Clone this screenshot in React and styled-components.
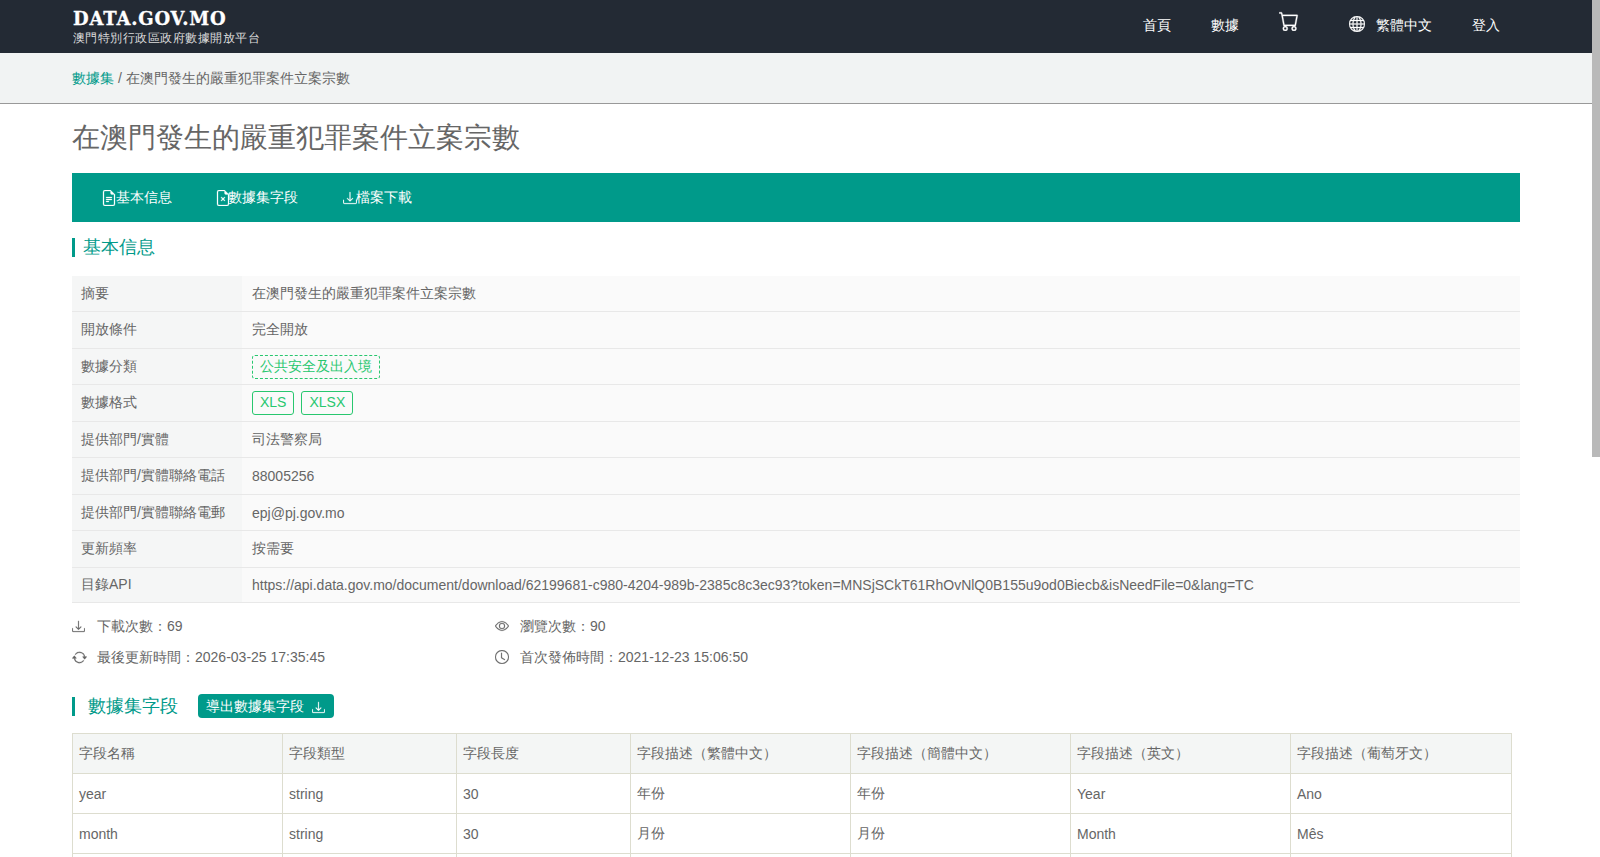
import React from 'react';
import styled, { createGlobalStyle } from 'styled-components';
import {
  BsArrowRepeat,
  BsCart,
  BsClock,
  BsDownload,
  BsEye,
  BsFileEarmarkText,
  BsFileEarmarkX,
  BsGlobe,
} from 'react-icons/bs';

const infoRows = [
  { label: '摘要', value: '在澳門發生的嚴重犯罪案件立案宗數' },
  { label: '開放條件', value: '完全開放' },
  { label: '數據分類', tags: ['公共安全及出入境'], dashed: true },
  { label: '數據格式', tags: ['XLS', 'XLSX'] },
  { label: '提供部門/實體', value: '司法警察局' },
  { label: '提供部門/實體聯絡電話', value: '88005256' },
  { label: '提供部門/實體聯絡電郵', value: 'epj@pj.gov.mo' },
  { label: '更新頻率', value: '按需要' },
  {
    label: '目錄API',
    value:
      'https://api.data.gov.mo/document/download/62199681-c980-4204-989b-2385c8c3ec93?token=MNSjSCkT61RhOvNlQ0B155u9od0Biecb&isNeedFile=0&lang=TC',
  },
];

const columns = [
  { title: '字段名稱', width: 210 },
  { title: '字段類型', width: 174 },
  { title: '字段長度', width: 174 },
  { title: '字段描述（繁體中文）', width: 220 },
  { title: '字段描述（簡體中文）', width: 220 },
  { title: '字段描述（英文）', width: 220 },
  { title: '字段描述（葡萄牙文）', width: 221 },
];

const fields = [
  ['year', 'string', '30', '年份', '年份', 'Year', 'Ano'],
  ['month', 'string', '30', '月份', '月份', 'Month', 'Mês'],
  ['', '', '', '', '', '', ''],
];

export default function App() {
  return (
    <>
      <GlobalStyle />
      <ScrollThumb />
      <Page>
        <Header>
          <Brand>
            <BrandName>DATA.GOV.MO</BrandName>
            <BrandSub>澳門特別行政區政府數據開放平台</BrandSub>
          </Brand>
          <Nav>
            <NavLink>首頁</NavLink>
            <NavLink>數據</NavLink>
            <CartLink>
              <BsCart size={20} />
            </CartLink>
            <LangLink>
              <BsGlobe size={16} />
              繁體中文
            </LangLink>
            <NavLink>登入</NavLink>
          </Nav>
        </Header>

        <Breadcrumb>
          <Crumb>數據集</Crumb> / 在澳門發生的嚴重犯罪案件立案宗數
        </Breadcrumb>

        <Main>
          <Title>在澳門發生的嚴重犯罪案件立案宗數</Title>

          <TabBar>
            <Tab>
              <BsFileEarmarkText size={16} />
              基本信息
            </Tab>
            <Tab>
              <BsFileEarmarkX size={16} />
              數據集字段
            </Tab>
            <Tab>
              <BsDownload size={14} />
              檔案下載
            </Tab>
          </TabBar>

          <SectionTitle>基本信息</SectionTitle>

          <InfoTable>
            <tbody>
              {infoRows.map((row) => (
                <tr key={row.label}>
                  <InfoLabel>{row.label}</InfoLabel>
                  <InfoValue>
                    {row.tags
                      ? row.tags.map((tag) => (
                          <Tag key={tag} $dashed={row.dashed}>
                            {tag}
                          </Tag>
                        ))
                      : row.value}
                  </InfoValue>
                </tr>
              ))}
            </tbody>
          </InfoTable>

          <Stats>
            <Stat>
              <StatIcon>
                <BsDownload size={13} />
              </StatIcon>
              下載次數：69
            </Stat>
            <Stat>
              <StatIcon>
                <BsEye size={14} />
              </StatIcon>
              瀏覽次數：90
            </Stat>
            <Stat>
              <StatIcon>
                <BsArrowRepeat size={15} />
              </StatIcon>
              最後更新時間：2026-03-25 17:35:45
            </Stat>
            <Stat>
              <StatIcon>
                <BsClock size={14} />
              </StatIcon>
              首次發佈時間：2021-12-23 15:06:50
            </Stat>
          </Stats>

          <FieldsHeading>
            <FieldsTitle>數據集字段</FieldsTitle>
            <ExportButton>
              導出數據集字段
              <BsDownload size={13} />
            </ExportButton>
          </FieldsHeading>

          <FieldTable>
            <colgroup>
              {columns.map((col) => (
                <col key={col.title} width={col.width} />
              ))}
            </colgroup>
            <thead>
              <tr>
                {columns.map((col) => (
                  <FieldHead key={col.title}>{col.title}</FieldHead>
                ))}
              </tr>
            </thead>
            <tbody>
              {fields.map((row, i) => (
                <tr key={i}>
                  {row.map((cell, j) => (
                    <FieldCell key={j}>{cell}</FieldCell>
                  ))}
                </tr>
              ))}
            </tbody>
          </FieldTable>
        </Main>
      </Page>
    </>
  );
}

const GlobalStyle = createGlobalStyle`
  body {
    margin: 0;
    background: #ffffff;
    color: #666666;
    font-family: "Liberation Sans", sans-serif;
    font-size: 14px;
  }

  svg {
    stroke: currentColor;
    stroke-width: 0.25;
  }
`;

// the browser scrollbar thumb, laid over the right edge of the window
const ScrollThumb = styled.div`
  position: fixed;
  top: 0;
  right: 0;
  width: 8px;
  height: 457px;
  background: #b9b9b9;
  z-index: 10;
`;

const Page = styled.div`
  min-height: 1607px;
  margin-right: 8px;
`;

const Header = styled.header`
  display: flex;
  justify-content: space-between;
  align-items: center;
  height: 53px;
  padding: 0 92px 0 73px;
  background: #232a34;
  color: #ffffff;
`;

const Brand = styled.div`
  display: flex;
  flex-direction: column;
  padding-top: 3px;
`;

const BrandName = styled.div`
  font-family: "DejaVu Serif", "Liberation Serif", serif;
  font-size: 18px;
  font-weight: 700;
  line-height: 20px;
  letter-spacing: 0.8px;
  -webkit-text-stroke: 0.3px #ffffff;
`;

const BrandSub = styled.div`
  margin-top: 1px;
  font-size: 12px;
  line-height: 17px;
  letter-spacing: 0.47px;
  color: #dcdcdc;
`;

const Nav = styled.nav`
  display: flex;
  align-items: center;
  gap: 40px;
  padding-bottom: 3px;
`;

const NavLink = styled.a`
  line-height: 20px;
`;

const CartLink = styled(NavLink)`
  display: flex;
  margin: -8px 10px 0 0;
`;

const LangLink = styled(NavLink)`
  display: flex;
  align-items: center;
  gap: 11px;

  svg {
    margin-top: -2px;
  }
`;

const Breadcrumb = styled.div`
  height: 51px;
  padding-left: 72px;
  line-height: 50px;
  box-sizing: border-box;
  background: #f1f3f3;
  border-bottom: 1px solid #999999;
`;

const Crumb = styled.a`
  color: #009a8a;
`;

const Main = styled.main`
  padding: 0 72px;
`;

const Title = styled.h1`
  margin: 0;
  padding-top: 14px;
  height: 69px;
  box-sizing: border-box;
  font-size: 28px;
  font-weight: 400;
  line-height: 40px;
`;

const TabBar = styled.div`
  display: flex;
  gap: 43px;
  height: 49px;
  padding-left: 29px;
  align-items: center;
  background: #009a8a;
`;

const Tab = styled.a`
  display: flex;
  align-items: center;
  color: #ffffff;

  svg {
    margin-right: -1px;
  }

  &:nth-child(2) {
    margin-right: 2px;

    svg {
      margin-right: -3px;
    }
  }
`;

const SectionTitle = styled.h2`
  margin: 16px 0 19px;
  padding-left: 8px;
  border-left: 3px solid #009a8a;
  height: 19px;
  font-size: 18px;
  font-weight: 400;
  line-height: 19px;
  color: #009a8a;
`;

const InfoTable = styled.table`
  width: 100%;
  border-collapse: collapse;

  tr {
    height: 36.5px;
    border-bottom: 1px solid #e8e8e8;
  }

  td {
    padding-top: 1px;
  }

  tr:first-child {
    height: 35.5px;
  }

  tr:last-child {
    height: 35.5px;
  }

  tr:first-child td,
  tr:last-child td {
    padding-top: 0;
  }
`;

const InfoLabel = styled.td`
  width: 170px;
  padding: 0 0 0 9px;
  box-sizing: border-box;
  background: #f5f6f6;
`;

const InfoValue = styled.td`
  padding: 0 0 0 10px;
  background: #fafafa;
`;

const Tag = styled.span`
  display: inline-block;
  margin-right: 7px;
  padding: 0 7px;
  height: 22px;
  line-height: 21px;
  vertical-align: middle;
  border: 1px ${(props) => (props.$dashed ? 'dashed' : 'solid')} #28c76f;
  border-radius: 3px;
  color: #28c76f;
`;

const Stats = styled.div`
  display: grid;
  grid-template-columns: 423px 1fr;
  row-gap: 11px;
  margin-top: 14px;
`;

const Stat = styled.div`
  display: flex;
  align-items: center;
  height: 20px;
`;

const StatIcon = styled.span`
  display: flex;
  width: 25px;
  margin-top: -2px;
`;

const FieldsHeading = styled.div`
  display: flex;
  align-items: center;
  margin: 26px 0 15px;
`;

const FieldsTitle = styled.h2`
  margin: 0;
  padding-left: 13px;
  border-left: 3px solid #009a8a;
  height: 19px;
  font-size: 18px;
  font-weight: 400;
  line-height: 19px;
  color: #009a8a;
`;

const ExportButton = styled.button`
  display: flex;
  align-items: center;
  gap: 8px;
  margin-left: 20px;
  height: 24px;
  padding: 2px 9px 0 8px;
  border: none;
  border-radius: 4px;
  background: #009a8a;
  color: #ffffff;
  font: inherit;
`;

const FieldTable = styled.table`
  width: 1440px;
  table-layout: fixed;
  border-collapse: collapse;
`;

const FieldHead = styled.th`
  height: 40px;
  padding: 0 6px;
  box-sizing: border-box;
  text-align: left;
  font-weight: 400;
  background: #f4f6f5;
  border: 1px solid #ddddcf;
`;

const FieldCell = styled.td`
  height: 40px;
  padding: 0 6px;
  box-sizing: border-box;
  border: 1px solid #ddddcf;
`;
